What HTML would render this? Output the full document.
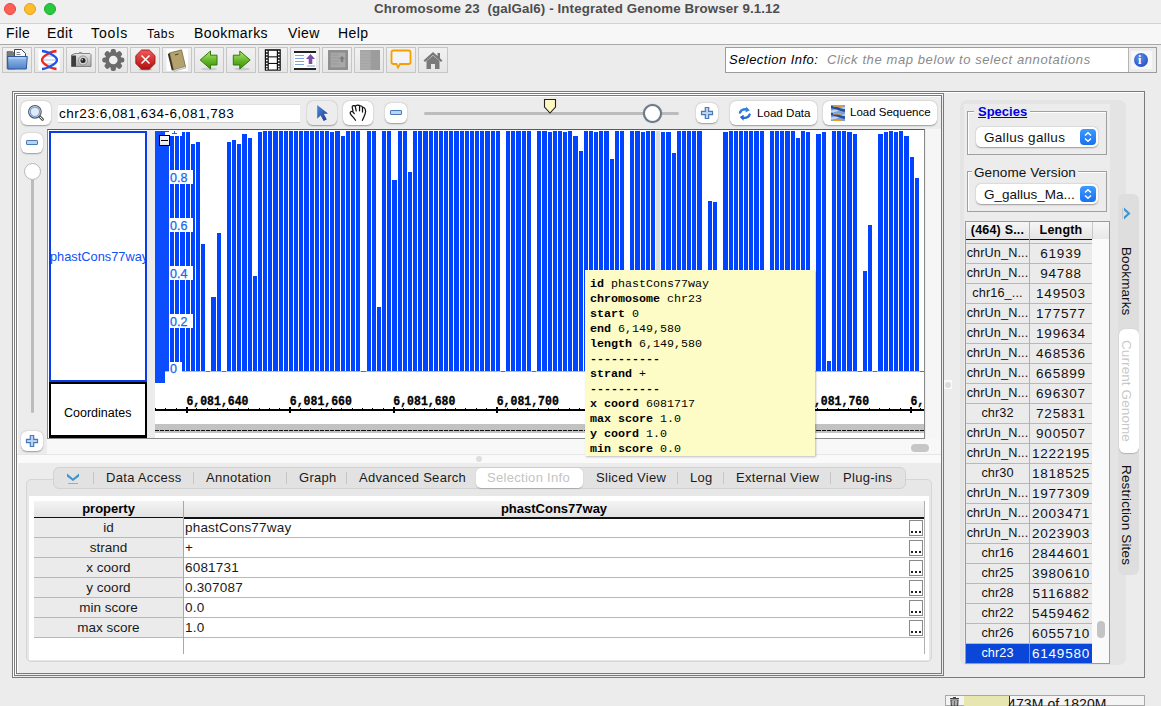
<!DOCTYPE html>
<html><head><meta charset="utf-8">
<style>
*{box-sizing:border-box}
html,body{margin:0;padding:0}
body{width:1161px;height:706px;overflow:hidden;background:#ececec;font-family:"Liberation Sans",sans-serif;position:relative;color:#000}
.a{position:absolute}
.t{position:absolute;white-space:nowrap;line-height:1}
#bars i{position:absolute;background:#0044ff;display:block}
#dsh i{position:absolute;top:429.5px;height:1.5px;background:#111;display:block}
.tb{position:absolute;top:47px;width:30px;height:26px;border:1px solid #c6c6c6;background:linear-gradient(#f2f2f2,#e6e6e6)}
.tb svg{position:absolute;left:2px;top:0px}
.rb{position:absolute;background:#fff;border-radius:6px;box-shadow:0 0.5px 1.5px rgba(0,0,0,.35)}
.mono{font-family:"Liberation Mono",monospace}
</style></head><body>

<!-- title bar -->
<div class="a" style="left:0;top:0;width:1161px;height:23px;background:#efefef"></div>
<div class="a" style="left:0;top:23px;width:1161px;height:1px;background:#d3d3d3"></div>
<div class="a" style="left:4px;top:3px;width:12px;height:12px;border-radius:50%;background:#fe5f57;border:0.5px solid #e2463f"></div>
<div class="a" style="left:24px;top:3px;width:12px;height:12px;border-radius:50%;background:#febc2e;border:0.5px solid #e1a116"></div>
<div class="a" style="left:44px;top:3px;width:12px;height:12px;border-radius:50%;background:#28c840;border:0.5px solid #1aac2c"></div>
<div class="t" style="left:374px;top:2px;font-size:13.3px;font-weight:bold;color:#4d4d4d;letter-spacing:0.12px">Chromosome 23&nbsp; (galGal6) - Integrated Genome Browser 9.1.12</div>

<!-- menu bar -->
<div class="a" style="left:0;top:24px;width:1161px;height:20px;background:#f7f7f7"></div>
<div class="a" style="left:0;top:44px;width:1161px;height:1px;background:#a9a9a9"></div>
<div class="t" style="left:6px;top:26px;font-size:14px;letter-spacing:0.45px">File</div>
<div class="t" style="left:47px;top:26px;font-size:14px;letter-spacing:0.45px">Edit</div>
<div class="t" style="left:91px;top:26px;font-size:14px;letter-spacing:0.9px">Tools</div>
<div class="t" style="left:147px;top:28px;font-size:12px;letter-spacing:0.6px">Tabs</div>
<div class="t" style="left:194px;top:26px;font-size:14px;letter-spacing:0.45px">Bookmarks</div>
<div class="t" style="left:288px;top:26px;font-size:14px;letter-spacing:0.45px">View</div>
<div class="t" style="left:338px;top:26px;font-size:14px;letter-spacing:0.45px">Help</div>

<!-- toolbar -->
<div class="tb" style="left:2px"><svg width="26" height="24" viewBox="0 0 26 24">
 <defs><linearGradient id="fg" x1="0" y1="0" x2="0" y2="1"><stop offset="0" stop-color="#9cc2ee"/><stop offset="1" stop-color="#4f82c8"/></linearGradient></defs>
 <path d="M2 3.5 H7.5 L9 5 H10 V21 H2 Z" fill="#7a7a7a" stroke="#555" stroke-width="0.6"/>
 <path d="M9.5 1.5 H16.5 L20.5 5.5 V12 H9.5 Z" fill="#fafafa" stroke="#444" stroke-width="1"/>
 <path d="M11.5 4.5 H15 M11.5 6.5 H15.5" stroke="#777" stroke-width="0.9"/>
 <path d="M2.5 8.5 H22.3 L21.3 21 H3 Z" fill="url(#fg)" stroke="#2d5a9a" stroke-width="1"/>
 <path d="M4 10 H20.5" stroke="#c4dbf6" stroke-width="1"/>
</svg></div>
<div class="tb" style="left:34px"><svg width="26" height="24" viewBox="0 0 26 24">
 <rect x="1.5" y="1.5" width="21" height="21" fill="#fff"/>
 <path d="M5.5 4.2 H19.5 M6 12 H19 M5.5 20 H19.5 M8 8 H17 M8 16 H17" stroke="#aac6e6" stroke-width="1.2"/>
 <path d="M19.5 3 C15 3 5 8 5 12 C5 16 15 21 19.5 21" stroke="#ee2a1e" stroke-width="2.3" fill="none"/>
 <path d="M5 3 C9 3 20 8 20 12 C20 16 9 21 5 21" stroke="#1f55e8" stroke-width="2.3" fill="none"/>
</svg></div>
<div class="tb" style="left:66px"><svg width="26" height="24" viewBox="0 0 26 24">
 <defs><linearGradient id="cg" x1="0" y1="0" x2="0" y2="1"><stop offset="0" stop-color="#e8e8e8"/><stop offset="1" stop-color="#a8a8a8"/></linearGradient></defs>
 <path d="M6 5.5 H21 L22 6.5 V18.5 H2.5 V7 Z" fill="url(#cg)" stroke="#707070" stroke-width="0.8"/>
 <rect x="2.5" y="7.5" width="4.5" height="11" fill="#3c3c3c"/>
 <rect x="10" y="4" width="3" height="2" fill="#9a9a9a"/>
 <circle cx="14" cy="12.5" r="4.6" fill="#d0d0d0" stroke="#888" stroke-width="0.8"/>
 <circle cx="14" cy="12.5" r="2.5" fill="#222"/>
 <circle cx="13.2" cy="11.7" r="0.7" fill="#fff"/>
</svg></div>
<div class="tb" style="left:98px"><svg width="26" height="24" viewBox="0 0 26 24">
 <g transform="translate(12.3 12)" fill="#6b6b6b">
 <circle r="8.3"/>
 <g id="gt"><rect x="-2.6" y="-11" width="5.2" height="5" rx="2"/></g>
 <use href="#gt" transform="rotate(45)"/><use href="#gt" transform="rotate(90)"/><use href="#gt" transform="rotate(135)"/>
 <use href="#gt" transform="rotate(180)"/><use href="#gt" transform="rotate(225)"/><use href="#gt" transform="rotate(270)"/><use href="#gt" transform="rotate(315)"/>
 </g>
 <circle cx="12.3" cy="12" r="4.3" fill="#f0f0f0"/>
</svg></div>
<div class="tb" style="left:130px"><svg width="26" height="24" viewBox="0 0 26 24">
 <defs><linearGradient id="rg" x1="0" y1="0" x2="0" y2="1"><stop offset="0" stop-color="#f25a5a"/><stop offset="1" stop-color="#b01010"/></linearGradient></defs>
 <ellipse cx="12.5" cy="21.5" rx="7" ry="1.2" fill="rgba(0,0,0,.2)"/>
 <path d="M8.5 2 H16.3 L22 7.7 V15.5 L16.3 21.2 H8.5 L2.8 15.5 V7.7 Z" fill="url(#rg)" stroke="#9a0a0a" stroke-width="0.8"/>
 <path d="M8.5 7.5 L16.5 15.5 M16.5 7.5 L8.5 15.5" stroke="#fff" stroke-width="1.5"/>
</svg></div>
<div class="tb" style="left:162px"><svg width="26" height="24" viewBox="0 0 26 24">
 <rect x="1.5" y="1" width="21.5" height="22" fill="#fff"/>
 <path d="M4.5 5 L16.5 1.8 L20.5 18.5 L8.5 22 Z" fill="#b3a26e" stroke="#6a5a30" stroke-width="0.7"/>
 <path d="M4.5 5 L8.5 22 L6.8 22.4 L2.8 6 Z" fill="#3a3220"/>
 <path d="M8.5 22 L20.5 18.5 L20.8 20 L9 23.3 Z" fill="#eee" stroke="#888" stroke-width="0.5"/>
 <path d="M10 7 L13.5 6" stroke="#5a4a25" stroke-width="1.2"/>
</svg></div>
<div class="tb" style="left:194px"><svg width="26" height="24" viewBox="0 0 26 24">
 <defs><linearGradient id="gg" x1="0" y1="0" x2="0" y2="1"><stop offset="0" stop-color="#b4e878"/><stop offset="0.6" stop-color="#5cb020"/><stop offset="1" stop-color="#3d9010"/></linearGradient></defs>
 <ellipse cx="12" cy="21" rx="8" ry="1.5" fill="rgba(0,0,0,.12)"/>
 <path d="M3.2 12 L13.5 3 V7.2 H20 V17 H13.5 V21 Z" fill="url(#gg)" stroke="#2f7a0a" stroke-width="1"/>
</svg></div>
<div class="tb" style="left:226px"><svg width="26" height="24" viewBox="0 0 26 24">
 <ellipse cx="13" cy="21" rx="8" ry="1.5" fill="rgba(0,0,0,.12)"/>
 <path d="M21.2 12 L10.8 3 V7.2 H4.3 V17 H10.8 V21 Z" fill="url(#gg)" stroke="#2f7a0a" stroke-width="1"/>
</svg></div>
<div class="tb" style="left:258px"><svg width="26" height="24" viewBox="0 0 26 24">
 <rect x="3.8" y="1.2" width="16" height="21.5" fill="#111"/>
 <rect x="7.8" y="2.8" width="8" height="5.5" fill="#fff"/><rect x="7.8" y="9.4" width="8" height="5.5" fill="#fff"/><rect x="7.8" y="16" width="8" height="5.5" fill="#fff"/>
 <path d="M5 3.5 h1.6 M5 6.5 h1.6 M5 9.5 h1.6 M5 12.5 h1.6 M5 15.5 h1.6 M5 18.5 h1.6 M5 21 h1.6 M17 3.5 h1.6 M17 6.5 h1.6 M17 9.5 h1.6 M17 12.5 h1.6 M17 15.5 h1.6 M17 18.5 h1.6 M17 21 h1.6" stroke="#fff" stroke-width="1.3"/>
</svg></div>
<div class="tb" style="left:290px"><svg width="26" height="24" viewBox="1 0 26 24">
 <rect x="2" y="3" width="22" height="19" fill="#fff"/>
 <rect x="2" y="3" width="22" height="2" fill="#222"/><rect x="2" y="20" width="22" height="2" fill="#222"/>
 <path d="M3 7.5 H12 M3 10.5 H12 M3 13.5 H12 M3 16.5 H12 M15 18 H23" stroke="#7aa6e0" stroke-width="1"/>
 <path d="M18.5 6 L23 11 H20.3 V16 H16.7 V11 H14 Z" fill="#7a4ea0"/>
</svg></div>
<div class="tb" style="left:322px"><svg width="26" height="24" viewBox="0 0 26 24">
 <rect x="3" y="2" width="20" height="20" fill="#909090"/>
 <rect x="5" y="4" width="16" height="16" fill="#a8a8a8" stroke="#8a8a8a" stroke-width="1"/>
 <path d="M6 7 H14 M6 10 H14 M6 13 H14 M6 16 H14" stroke="#999" stroke-width="1"/>
 <path d="M17 8 L20 11 H18.2 V14 H15.8 V11 H14 Z" fill="#7c7c7c"/>
</svg></div>
<div class="tb" style="left:354px"><svg width="26" height="24" viewBox="0 0 26 24">
 <rect x="3" y="2" width="20" height="20" fill="#a6a6a6"/>
 <rect x="14" y="2" width="9" height="20" fill="#9c9c9c"/>
 <path d="M3 5 H13 M3 8 H13 M3 11 H13 M3 14 H13 M3 17 H13 M3 20 H13" stroke="#b4b4b4" stroke-width="0.8"/>
</svg></div>
<div class="tb" style="left:386px"><svg width="26" height="24" viewBox="0 0 26 24">
 <path d="M4.5 2.5 H19.5 Q21.5 2.5 21.5 4.5 V14 Q21.5 16 19.5 16 H11 L9 19.5 L7.5 16 H4.5 Q2.5 16 2.5 14 V4.5 Q2.5 2.5 4.5 2.5 Z" fill="#f4f4f4" stroke="#f5a000" stroke-width="1.8"/>
</svg></div>
<div class="tb" style="left:418px"><svg width="26" height="24" viewBox="1 0 26 24">
 <path d="M3.5 12.5 L13 4 L22.5 12.5 L21 14 L13 7 L5 14 Z" fill="#777"/>
 <rect x="17.5" y="5" width="2.5" height="5" fill="#777"/>
 <path d="M6.5 13 L13 7.5 L19.5 13 V21 H15 V16 H11 V21 H6.5 Z" fill="#7a7a7a"/>
</svg></div>


<!-- selection info -->
<div class="a" style="left:725px;top:47px;width:432px;height:26px;background:#fff;border:1px solid #9c9c9c"></div>
<div class="t" style="left:729px;top:53px;font-size:13px;font-style:italic;letter-spacing:0.46px">Selection Info:</div>
<div class="t" style="left:827px;top:53px;font-size:13px;font-style:italic;color:#8a8a8a;letter-spacing:0.6px">Click the map below to select annotations</div>
<div class="a" style="left:1128px;top:48px;width:28px;height:24px;background:#ececec;border-left:1px solid #b4b4b4"></div>
<div class="a" style="left:1131px;top:51px;width:21px;height:18px;background:#f7f7f7"></div>
<div class="a" style="left:1134px;top:53px;width:14px;height:14px;border-radius:50%;background:radial-gradient(circle at 40% 35%,#5b8ff0,#1a3fb0);"></div>
<div class="t" style="left:1138px;top:54px;font-size:12px;font-weight:bold;color:#fff;font-family:'Liberation Serif',serif">i</div>

<!-- outer frames -->
<div class="a" style="left:12px;top:91px;width:1133px;height:587px;border:1px solid #7a7a7a;box-shadow:inset 1px 1px 0 #fff"></div>
<div class="a" style="left:14px;top:93px;width:930px;height:583px;border:1px solid #7a7a7a;box-shadow:inset 1px 1px 0 #fff"></div>
<div class="a" style="left:16px;top:95px;width:926px;height:579px;border:1px solid #7a7a7a;box-shadow:inset 1px 1px 0 #fff"></div>

<!-- ===== MAIN PANEL ===== -->
<!-- top controls -->
<div class="rb" style="left:21px;top:101px;width:30px;height:24px"></div>
<svg class="a" style="left:27px;top:104px" width="18" height="18" viewBox="0 0 18 18">
 <line x1="12.3" y1="12.3" x2="15.6" y2="15.6" stroke="#555" stroke-width="2.8" stroke-linecap="round"/>
 <line x1="12.6" y1="12.6" x2="15.4" y2="15.4" stroke="#f4f4f4" stroke-width="1" stroke-linecap="round"/>
 <circle cx="7.9" cy="7.8" r="6.3" fill="#f2f2f2" stroke="#555" stroke-width="1.2"/>
 <circle cx="7.9" cy="7.8" r="4.7" fill="#dfeaf8" stroke="#6a9fe0" stroke-width="1.1"/>
</svg>
<div class="a" style="left:58px;top:104px;width:242px;height:19px;background:#fff;border-bottom:1px solid #cdcdcd;box-shadow:inset 0 1px 0 #e0e0e0"></div>
<div class="t" style="left:59px;top:107px;font-size:13.5px;letter-spacing:0.53px">chr23:6,081,634-6,081,783</div>

<div class="a" style="left:307px;top:101px;width:30px;height:24px;border-radius:6px;background:#ededed;box-shadow:0 0.5px 1.5px rgba(0,0,0,.35)"></div>
<svg class="a" style="left:314px;top:104px" width="18" height="18" viewBox="0 0 18 18">
 <defs><linearGradient id="ag" x1="0" y1="0" x2="1" y2="1"><stop offset="0" stop-color="#4f8ae0"/><stop offset="1" stop-color="#173a90"/></linearGradient></defs>
 <path d="M3.2 0.9 L3.2 14.7 L6.6 11.4 L9.6 17 L12.8 15.6 L9.9 10 L14 9.5 Z" fill="url(#ag)"/>
</svg>
<div class="rb" style="left:343px;top:101px;width:30px;height:24px"></div>
<svg class="a" style="left:343px;top:101px" width="30" height="24" viewBox="0 0 30 24">
 <path d="M12.5 19.3 C11 16.5 8 14.5 7.3 12.5 C6.8 11 8.3 9.8 9.8 10.8 L11.3 12.6 M10 10.2 L9.2 6.2 C8.9 4.6 11.8 4.1 12.3 5.5 L13.2 9.8 M12.6 5.2 C12.9 3.9 16.4 3.8 16.6 5.1 L16.5 9.8 M16.5 5.1 C17.5 4.6 19.3 5 19.5 6.2 L19.5 11 M19.3 6 C21.5 6.4 22.6 8 22.6 10.5 C22.5 13.5 20.5 16.5 19.4 19.4" fill="none" stroke="#111" stroke-width="1.25" stroke-linecap="round" stroke-linejoin="round"/>
</svg>
<div class="rb" style="left:385px;top:103px;width:22px;height:20px"></div>
<div class="a" style="left:390px;top:110px;width:12px;height:5px;border:1.2px solid #4a79b8;background:#bcd3f0;border-radius:1px"></div>

<div class="a" style="left:424px;top:112px;width:255px;height:3px;background:#bcbcbc;border-radius:2px"></div>
<svg class="a" style="left:543px;top:98px" width="15" height="17" viewBox="0 0 15 17">
 <path d="M1.5 1.5 H12.5 V9 L7 15 L1.5 9 Z" fill="#fdf7c0" stroke="#222" stroke-width="1.1"/>
</svg>
<div class="a" style="left:643px;top:104px;width:19px;height:19px;border-radius:50%;background:#fff;border:2.5px solid #6c7c8c;box-shadow:0 0 1px rgba(0,0,0,.4)"></div>
<div class="rb" style="left:696px;top:103px;width:22px;height:20px"></div>
<svg class="a" style="left:700px;top:106px" width="14" height="14" viewBox="0 0 14 14">
 <path d="M5.3 1.5 H8.7 V5.3 H12.5 V8.7 H8.7 V12.5 H5.3 V8.7 H1.5 V5.3 H5.3 Z" fill="#bcd3f0" stroke="#4a79b8" stroke-width="1.2"/>
</svg>

<div class="rb" style="left:730px;top:101px;width:87px;height:24px"></div>
<svg class="a" style="left:734px;top:101px" width="30" height="24" viewBox="0 0 30 24">
 <defs><linearGradient id="ldg" x1="0" y1="0" x2="1" y2="1"><stop offset="0" stop-color="#3f8fe8"/><stop offset="1" stop-color="#1a5ad0"/></linearGradient></defs>
 <path d="M6 11.5 C7 8.8 9.5 8 12.8 8.3" stroke="url(#ldg)" stroke-width="2.4" fill="none" stroke-linecap="round"/>
 <path d="M12 5.8 L15.8 9.3 L11.6 11.6 Z" fill="#2a86e0"/>
 <path d="M15.6 13.6 C14.6 16.3 12 17.2 8.8 16.8" stroke="url(#ldg)" stroke-width="2.4" fill="none" stroke-linecap="round"/>
 <path d="M9.6 13.8 L5.8 16 L9.6 19.8 Z" fill="#1f62d8"/>
</svg>
<div class="t" style="left:757px;top:106.7px;font-size:11.6px">Load Data</div>
<div class="rb" style="left:823px;top:101px;width:114px;height:24px"></div>
<svg class="a" style="left:826px;top:101px" width="30" height="24" viewBox="0 0 30 24">
 <rect x="5" y="4" width="14" height="16" fill="#7d9fd8"/>
 <path d="M5 10.5 C9 10.5 15 7.2 19 7.2 M5 17.5 C9 17.5 15 14.3 19 14.3" stroke="#c4d6f2" stroke-width="2.2" fill="none"/>
 <path d="M5 6 C9 6 15 9.5 19 9.5 M5 13 C9 13 15 16.5 19 16.5" stroke="#244e9e" stroke-width="2.4" fill="none"/>
 <path d="M7 5 H17 M7 12.7 H15 M7 19.4 H15" stroke="#f0a020" stroke-width="1.4"/>
</svg>
<div class="t" style="left:850px;top:106.7px;font-size:11.5px">Load Sequence</div>

<!-- left vertical zoom -->
<div class="rb" style="left:21px;top:133px;width:22px;height:20px"></div>
<div class="a" style="left:26px;top:140px;width:12px;height:5px;border:1.2px solid #4a79b8;background:#bcd3f0;border-radius:1px"></div>
<div class="a" style="left:31px;top:175px;width:3px;height:238px;background:#bcbcbc;border-radius:2px"></div>
<div class="a" style="left:24px;top:163px;width:17px;height:17px;border-radius:50%;background:#fff;border:0.8px solid #b8b8b8"></div>
<div class="rb" style="left:21px;top:431px;width:22px;height:20px;z-index:2"></div>
<svg class="a" style="left:25px;top:434px;z-index:3" width="14" height="14" viewBox="0 0 14 14">
 <path d="M5.3 1.5 H8.7 V5.3 H12.5 V8.7 H8.7 V12.5 H5.3 V8.7 H1.5 V5.3 H5.3 Z" fill="#bcd3f0" stroke="#4a79b8" stroke-width="1.2"/>
</svg>

<!-- chart container -->
<div class="a" style="left:47px;top:129px;width:878px;height:310px;border:1px solid #8a8a8a;border-top-color:#5a5a5a;background:#fff"></div>
<div class="a" style="left:147px;top:130px;width:8px;height:308px;background:#ececec"></div>
<div class="a" style="left:926px;top:129px;width:15px;height:310px;background:#f6f6f6"></div>
<div class="a" style="left:49px;top:131px;width:98px;height:251px;border:2px solid #0a3ce8;background:#fff;overflow:hidden">
  <div class="t" style="left:-1px;top:118px;font-size:12.8px;color:#1050f8;letter-spacing:0px">phastCons77way</div>
</div>
<div class="a" style="left:49px;top:382px;width:98px;height:56px;border:2px solid #000;background:#fff;border-bottom-width:3px"></div>
<div class="t" style="left:64px;top:406.5px;font-size:12.5px">Coordinates</div>

<!-- bars -->
<div id="bars"><i style="left:170px;top:131px;width:4px;height:240px"></i><i style="left:175px;top:131px;width:4px;height:240px"></i><i style="left:180px;top:132px;width:5px;height:239px"></i><i style="left:186px;top:132px;width:4px;height:239px"></i><i style="left:191px;top:144px;width:4px;height:227px"></i><i style="left:196px;top:142px;width:4px;height:229px"></i><i style="left:201px;top:244px;width:4px;height:127px"></i><i style="left:206px;top:371px;width:4px;height:1px"></i><i style="left:211px;top:297px;width:5px;height:74px"></i><i style="left:217px;top:233px;width:4px;height:138px"></i><i style="left:222px;top:371px;width:4px;height:1px"></i><i style="left:227px;top:142px;width:4px;height:229px"></i><i style="left:232px;top:140px;width:4px;height:231px"></i><i style="left:237px;top:144px;width:4px;height:227px"></i><i style="left:242px;top:134px;width:5px;height:237px"></i><i style="left:248px;top:138px;width:4px;height:233px"></i><i style="left:253px;top:276px;width:4px;height:95px"></i><i style="left:258px;top:132px;width:4px;height:239px"></i><i style="left:263px;top:131px;width:4px;height:240px"></i><i style="left:268px;top:131px;width:4px;height:240px"></i><i style="left:273px;top:131px;width:5px;height:240px"></i><i style="left:279px;top:131px;width:4px;height:240px"></i><i style="left:284px;top:131px;width:4px;height:240px"></i><i style="left:289px;top:131px;width:4px;height:240px"></i><i style="left:294px;top:131px;width:4px;height:240px"></i><i style="left:299px;top:131px;width:4px;height:240px"></i><i style="left:304px;top:131px;width:5px;height:240px"></i><i style="left:310px;top:131px;width:4px;height:240px"></i><i style="left:315px;top:131px;width:4px;height:240px"></i><i style="left:320px;top:131px;width:4px;height:240px"></i><i style="left:325px;top:131px;width:4px;height:240px"></i><i style="left:330px;top:132px;width:4px;height:239px"></i><i style="left:335px;top:131px;width:5px;height:240px"></i><i style="left:341px;top:136px;width:4px;height:235px"></i><i style="left:346px;top:131px;width:4px;height:240px"></i><i style="left:351px;top:131px;width:4px;height:240px"></i><i style="left:356px;top:131px;width:4px;height:240px"></i><i style="left:361px;top:371px;width:5px;height:1px"></i><i style="left:367px;top:131px;width:4px;height:240px"></i><i style="left:372px;top:131px;width:4px;height:240px"></i><i style="left:377px;top:307px;width:4px;height:64px"></i><i style="left:382px;top:131px;width:4px;height:240px"></i><i style="left:387px;top:131px;width:4px;height:240px"></i><i style="left:392px;top:180px;width:5px;height:191px"></i><i style="left:398px;top:131px;width:4px;height:240px"></i><i style="left:403px;top:131px;width:4px;height:240px"></i><i style="left:408px;top:172px;width:4px;height:199px"></i><i style="left:413px;top:131px;width:4px;height:240px"></i><i style="left:418px;top:131px;width:4px;height:240px"></i><i style="left:423px;top:131px;width:5px;height:240px"></i><i style="left:429px;top:131px;width:4px;height:240px"></i><i style="left:434px;top:131px;width:4px;height:240px"></i><i style="left:439px;top:131px;width:4px;height:240px"></i><i style="left:444px;top:131px;width:4px;height:240px"></i><i style="left:449px;top:131px;width:4px;height:240px"></i><i style="left:454px;top:131px;width:5px;height:240px"></i><i style="left:460px;top:131px;width:4px;height:240px"></i><i style="left:465px;top:131px;width:4px;height:240px"></i><i style="left:470px;top:131px;width:4px;height:240px"></i><i style="left:475px;top:131px;width:4px;height:240px"></i><i style="left:480px;top:131px;width:4px;height:240px"></i><i style="left:485px;top:131px;width:5px;height:240px"></i><i style="left:491px;top:131px;width:4px;height:240px"></i><i style="left:496px;top:131px;width:4px;height:240px"></i><i style="left:501px;top:371px;width:4px;height:1px"></i><i style="left:506px;top:131px;width:4px;height:240px"></i><i style="left:511px;top:131px;width:4px;height:240px"></i><i style="left:516px;top:131px;width:5px;height:240px"></i><i style="left:522px;top:131px;width:4px;height:240px"></i><i style="left:527px;top:131px;width:4px;height:240px"></i><i style="left:532px;top:371px;width:4px;height:1px"></i><i style="left:537px;top:131px;width:4px;height:240px"></i><i style="left:542px;top:131px;width:5px;height:240px"></i><i style="left:548px;top:132px;width:4px;height:239px"></i><i style="left:553px;top:131px;width:4px;height:240px"></i><i style="left:558px;top:131px;width:4px;height:240px"></i><i style="left:563px;top:132px;width:4px;height:239px"></i><i style="left:568px;top:131px;width:4px;height:240px"></i><i style="left:573px;top:136px;width:5px;height:235px"></i><i style="left:579px;top:151px;width:4px;height:220px"></i><i style="left:584px;top:131px;width:4px;height:240px"></i><i style="left:589px;top:131px;width:4px;height:240px"></i><i style="left:594px;top:132px;width:4px;height:239px"></i><i style="left:599px;top:131px;width:4px;height:240px"></i><i style="left:604px;top:131px;width:5px;height:240px"></i><i style="left:610px;top:159px;width:4px;height:212px"></i><i style="left:615px;top:131px;width:4px;height:240px"></i><i style="left:620px;top:131px;width:4px;height:240px"></i><i style="left:625px;top:371px;width:4px;height:1px"></i><i style="left:630px;top:131px;width:4px;height:240px"></i><i style="left:635px;top:131px;width:5px;height:240px"></i><i style="left:641px;top:132px;width:4px;height:239px"></i><i style="left:646px;top:131px;width:4px;height:240px"></i><i style="left:651px;top:131px;width:4px;height:240px"></i><i style="left:656px;top:131px;width:4px;height:240px;background:#dcdcdc"></i><i style="left:661px;top:132px;width:4px;height:239px"></i><i style="left:666px;top:132px;width:5px;height:239px"></i><i style="left:672px;top:153px;width:4px;height:218px"></i><i style="left:677px;top:131px;width:4px;height:240px"></i><i style="left:682px;top:131px;width:4px;height:240px"></i><i style="left:687px;top:131px;width:4px;height:240px"></i><i style="left:692px;top:131px;width:4px;height:240px"></i><i style="left:697px;top:131px;width:5px;height:240px"></i><i style="left:703px;top:371px;width:4px;height:1px"></i><i style="left:708px;top:201px;width:4px;height:170px"></i><i style="left:713px;top:202px;width:4px;height:169px"></i><i style="left:718px;top:371px;width:4px;height:1px"></i><i style="left:723px;top:132px;width:5px;height:239px"></i><i style="left:729px;top:131px;width:4px;height:240px"></i><i style="left:734px;top:131px;width:4px;height:240px"></i><i style="left:739px;top:131px;width:4px;height:240px"></i><i style="left:744px;top:131px;width:4px;height:240px"></i><i style="left:749px;top:131px;width:4px;height:240px"></i><i style="left:754px;top:131px;width:5px;height:240px"></i><i style="left:760px;top:131px;width:4px;height:240px"></i><i style="left:765px;top:371px;width:4px;height:1px"></i><i style="left:770px;top:131px;width:4px;height:240px"></i><i style="left:775px;top:131px;width:4px;height:240px"></i><i style="left:780px;top:131px;width:4px;height:240px"></i><i style="left:785px;top:131px;width:5px;height:240px"></i><i style="left:791px;top:131px;width:4px;height:240px"></i><i style="left:796px;top:138px;width:4px;height:233px"></i><i style="left:801px;top:131px;width:4px;height:240px"></i><i style="left:806px;top:132px;width:4px;height:239px"></i><i style="left:811px;top:371px;width:4px;height:1px"></i><i style="left:816px;top:134px;width:5px;height:237px"></i><i style="left:822px;top:132px;width:4px;height:239px"></i><i style="left:827px;top:361px;width:4px;height:10px"></i><i style="left:832px;top:131px;width:4px;height:240px"></i><i style="left:837px;top:131px;width:4px;height:240px"></i><i style="left:842px;top:131px;width:4px;height:240px"></i><i style="left:847px;top:132px;width:5px;height:239px"></i><i style="left:853px;top:134px;width:4px;height:237px"></i><i style="left:858px;top:371px;width:4px;height:1px"></i><i style="left:863px;top:271px;width:4px;height:100px"></i><i style="left:868px;top:225px;width:4px;height:146px"></i><i style="left:873px;top:371px;width:4px;height:1px"></i><i style="left:878px;top:134px;width:5px;height:237px"></i><i style="left:884px;top:132px;width:4px;height:239px"></i><i style="left:889px;top:131px;width:4px;height:240px"></i><i style="left:894px;top:132px;width:4px;height:239px"></i><i style="left:899px;top:131px;width:4px;height:240px"></i><i style="left:904px;top:136px;width:5px;height:235px"></i><i style="left:910px;top:157px;width:4px;height:214px"></i><i style="left:915px;top:178px;width:4px;height:193px"></i><i style="left:920px;top:371px;width:4px;height:1px"></i></div>
<div class="a" style="left:155px;top:371px;width:769px;height:1px;background:#8c8c8c;opacity:.6"></div>
<!-- y labels -->
<div class="a" style="left:169px;top:170px;width:24px;height:14px;background:#fff"></div>
<div class="t" style="left:170px;top:172px;font-size:12.5px;color:#1a66f0;-webkit-text-stroke:0.25px #1a66f0">0.8</div>
<div class="a" style="left:169px;top:218px;width:24px;height:14px;background:#fff"></div>
<div class="t" style="left:170px;top:220px;font-size:12.5px;color:#1a66f0;-webkit-text-stroke:0.25px #1a66f0">0.6</div>
<div class="a" style="left:169px;top:266px;width:24px;height:14px;background:#fff"></div>
<div class="t" style="left:170px;top:268px;font-size:12.5px;color:#1a66f0;-webkit-text-stroke:0.25px #1a66f0">0.4</div>
<div class="a" style="left:169px;top:314px;width:24px;height:14px;background:#fff"></div>
<div class="t" style="left:170px;top:316px;font-size:12.5px;color:#1a66f0;-webkit-text-stroke:0.25px #1a66f0">0.2</div>
<div class="a" style="left:169px;top:362px;width:13px;height:10px;background:#fff"></div>
<div class="t" style="left:170px;top:363px;font-size:12.5px;color:#1a66f0;-webkit-text-stroke:0.25px #1a66f0">0</div>

<!-- handle -->
<div class="a" style="left:155px;top:131px;width:14px;height:240px;background:#0b4cff"></div><div class="a" style="left:169px;top:131px;width:1px;height:240px;background:#fff"></div>
<div class="a" style="left:155px;top:371px;width:10px;height:12px;background:#0b4cff"></div>
<div class="a" style="left:165px;top:132px;width:5px;height:4px;background:#fff"></div><div class="a" style="left:170px;top:131px;width:12px;height:5px;background:#fff"></div>
<div class="a" style="left:173.5px;top:131px;width:1.3px;height:2.5px;background:#1f66f0"></div>
<div class="a" style="left:171.5px;top:133px;width:5px;height:1.2px;background:#1f66f0"></div>
<div class="a" style="left:159px;top:135px;width:11px;height:11px;border:1px solid #000;background:linear-gradient(#fff,#e8e8e8)"></div>
<div class="a" style="left:161px;top:140px;width:7px;height:1px;background:#000"></div>
<!-- ruler -->
<div class="a" style="left:155px;top:380px;width:769px;height:44px;overflow:hidden"><div class="a" style="left:-155px;top:-380px;width:1161px;height:706px"><div class="a" style="left:155px;top:409px;width:769px;height:2px;background:#000"></div><div class="a" style="left:155px;top:408px;width:1px;height:1px;background:#000"></div><div class="a" style="left:165px;top:408px;width:1px;height:1px;background:#000"></div><div class="a" style="left:176px;top:408px;width:1px;height:1px;background:#000"></div><div class="a" style="left:186px;top:407px;width:2px;height:6px;background:#000"></div><div class="a" style="left:196px;top:408px;width:1px;height:1px;background:#000"></div><div class="a" style="left:207px;top:408px;width:1px;height:1px;background:#000"></div><div class="a" style="left:217px;top:408px;width:1px;height:1px;background:#000"></div><div class="a" style="left:227px;top:408px;width:1px;height:1px;background:#000"></div><div class="a" style="left:238px;top:408px;width:1px;height:1px;background:#000"></div><div class="a" style="left:248px;top:408px;width:1px;height:1px;background:#000"></div><div class="a" style="left:259px;top:408px;width:1px;height:1px;background:#000"></div><div class="a" style="left:269px;top:408px;width:1px;height:1px;background:#000"></div><div class="a" style="left:279px;top:408px;width:1px;height:1px;background:#000"></div><div class="a" style="left:289px;top:407px;width:2px;height:6px;background:#000"></div><div class="a" style="left:300px;top:408px;width:1px;height:1px;background:#000"></div><div class="a" style="left:310px;top:408px;width:1px;height:1px;background:#000"></div><div class="a" style="left:321px;top:408px;width:1px;height:1px;background:#000"></div><div class="a" style="left:331px;top:408px;width:1px;height:1px;background:#000"></div><div class="a" style="left:341px;top:408px;width:1px;height:1px;background:#000"></div><div class="a" style="left:352px;top:408px;width:1px;height:1px;background:#000"></div><div class="a" style="left:362px;top:408px;width:1px;height:1px;background:#000"></div><div class="a" style="left:372px;top:408px;width:1px;height:1px;background:#000"></div><div class="a" style="left:383px;top:408px;width:1px;height:1px;background:#000"></div><div class="a" style="left:393px;top:407px;width:2px;height:6px;background:#000"></div><div class="a" style="left:403px;top:408px;width:1px;height:1px;background:#000"></div><div class="a" style="left:414px;top:408px;width:1px;height:1px;background:#000"></div><div class="a" style="left:424px;top:408px;width:1px;height:1px;background:#000"></div><div class="a" style="left:434px;top:408px;width:1px;height:1px;background:#000"></div><div class="a" style="left:445px;top:408px;width:1px;height:1px;background:#000"></div><div class="a" style="left:455px;top:408px;width:1px;height:1px;background:#000"></div><div class="a" style="left:465px;top:408px;width:1px;height:1px;background:#000"></div><div class="a" style="left:476px;top:408px;width:1px;height:1px;background:#000"></div><div class="a" style="left:486px;top:408px;width:1px;height:1px;background:#000"></div><div class="a" style="left:496px;top:407px;width:2px;height:6px;background:#000"></div><div class="a" style="left:507px;top:408px;width:1px;height:1px;background:#000"></div><div class="a" style="left:517px;top:408px;width:1px;height:1px;background:#000"></div><div class="a" style="left:527px;top:408px;width:1px;height:1px;background:#000"></div><div class="a" style="left:538px;top:408px;width:1px;height:1px;background:#000"></div><div class="a" style="left:548px;top:408px;width:1px;height:1px;background:#000"></div><div class="a" style="left:558px;top:408px;width:1px;height:1px;background:#000"></div><div class="a" style="left:569px;top:408px;width:1px;height:1px;background:#000"></div><div class="a" style="left:579px;top:408px;width:1px;height:1px;background:#000"></div><div class="a" style="left:589px;top:408px;width:1px;height:1px;background:#000"></div><div class="a" style="left:600px;top:407px;width:2px;height:6px;background:#000"></div><div class="a" style="left:610px;top:408px;width:1px;height:1px;background:#000"></div><div class="a" style="left:621px;top:408px;width:1px;height:1px;background:#000"></div><div class="a" style="left:631px;top:408px;width:1px;height:1px;background:#000"></div><div class="a" style="left:641px;top:408px;width:1px;height:1px;background:#000"></div><div class="a" style="left:652px;top:408px;width:1px;height:1px;background:#000"></div><div class="a" style="left:662px;top:408px;width:1px;height:1px;background:#000"></div><div class="a" style="left:672px;top:408px;width:1px;height:1px;background:#000"></div><div class="a" style="left:683px;top:408px;width:1px;height:1px;background:#000"></div><div class="a" style="left:693px;top:408px;width:1px;height:1px;background:#000"></div><div class="a" style="left:703px;top:407px;width:2px;height:6px;background:#000"></div><div class="a" style="left:714px;top:408px;width:1px;height:1px;background:#000"></div><div class="a" style="left:724px;top:408px;width:1px;height:1px;background:#000"></div><div class="a" style="left:734px;top:408px;width:1px;height:1px;background:#000"></div><div class="a" style="left:745px;top:408px;width:1px;height:1px;background:#000"></div><div class="a" style="left:755px;top:408px;width:1px;height:1px;background:#000"></div><div class="a" style="left:765px;top:408px;width:1px;height:1px;background:#000"></div><div class="a" style="left:776px;top:408px;width:1px;height:1px;background:#000"></div><div class="a" style="left:786px;top:408px;width:1px;height:1px;background:#000"></div><div class="a" style="left:796px;top:408px;width:1px;height:1px;background:#000"></div><div class="a" style="left:806px;top:407px;width:2px;height:6px;background:#000"></div><div class="a" style="left:817px;top:408px;width:1px;height:1px;background:#000"></div><div class="a" style="left:827px;top:408px;width:1px;height:1px;background:#000"></div><div class="a" style="left:838px;top:408px;width:1px;height:1px;background:#000"></div><div class="a" style="left:848px;top:408px;width:1px;height:1px;background:#000"></div><div class="a" style="left:858px;top:408px;width:1px;height:1px;background:#000"></div><div class="a" style="left:869px;top:408px;width:1px;height:1px;background:#000"></div><div class="a" style="left:879px;top:408px;width:1px;height:1px;background:#000"></div><div class="a" style="left:889px;top:408px;width:1px;height:1px;background:#000"></div><div class="a" style="left:900px;top:408px;width:1px;height:1px;background:#000"></div><div class="a" style="left:910px;top:407px;width:2px;height:6px;background:#000"></div><div class="a" style="left:920px;top:408px;width:1px;height:1px;background:#000"></div><div class="t mono" style="left:186.4px;top:396px;font-size:11.5px;font-weight:bold;transform:scaleY(1.12);transform-origin:0 100%;-webkit-text-stroke:0.3px #000">6,081,640</div><div class="t mono" style="left:289.8px;top:396px;font-size:11.5px;font-weight:bold;transform:scaleY(1.12);transform-origin:0 100%;-webkit-text-stroke:0.3px #000">6,081,660</div><div class="t mono" style="left:393.3px;top:396px;font-size:11.5px;font-weight:bold;transform:scaleY(1.12);transform-origin:0 100%;-webkit-text-stroke:0.3px #000">6,081,680</div><div class="t mono" style="left:496.7px;top:396px;font-size:11.5px;font-weight:bold;transform:scaleY(1.12);transform-origin:0 100%;-webkit-text-stroke:0.3px #000">6,081,700</div><div class="t mono" style="left:600.1px;top:396px;font-size:11.5px;font-weight:bold;transform:scaleY(1.12);transform-origin:0 100%;-webkit-text-stroke:0.3px #000">6,081,720</div><div class="t mono" style="left:703.6px;top:396px;font-size:11.5px;font-weight:bold;transform:scaleY(1.12);transform-origin:0 100%;-webkit-text-stroke:0.3px #000">6,081,740</div><div class="t mono" style="left:807.0px;top:396px;font-size:11.5px;font-weight:bold;transform:scaleY(1.12);transform-origin:0 100%;-webkit-text-stroke:0.3px #000">6,081,760</div><div class="t mono" style="left:910.4px;top:396px;font-size:11.5px;font-weight:bold;transform:scaleY(1.12);transform-origin:0 100%;-webkit-text-stroke:0.3px #000">6,081,780</div></div></div>
<div class="a" style="left:155px;top:424px;width:769px;height:9px;background:#c2c2c2"></div>
<div id="dsh"><i style="left:155px;width:4px"></i><i style="left:160px;width:4px"></i><i style="left:165px;width:4px"></i><i style="left:170px;width:4px"></i><i style="left:175px;width:4px"></i><i style="left:180px;width:5px"></i><i style="left:186px;width:4px"></i><i style="left:191px;width:4px"></i><i style="left:196px;width:4px"></i><i style="left:201px;width:4px"></i><i style="left:206px;width:4px"></i><i style="left:211px;width:5px"></i><i style="left:217px;width:4px"></i><i style="left:222px;width:4px"></i><i style="left:227px;width:4px"></i><i style="left:232px;width:4px"></i><i style="left:237px;width:4px"></i><i style="left:242px;width:5px"></i><i style="left:248px;width:4px"></i><i style="left:253px;width:4px"></i><i style="left:258px;width:4px"></i><i style="left:263px;width:4px"></i><i style="left:268px;width:4px"></i><i style="left:273px;width:5px"></i><i style="left:279px;width:4px"></i><i style="left:284px;width:4px"></i><i style="left:289px;width:4px"></i><i style="left:294px;width:4px"></i><i style="left:299px;width:4px"></i><i style="left:304px;width:5px"></i><i style="left:310px;width:4px"></i><i style="left:315px;width:4px"></i><i style="left:320px;width:4px"></i><i style="left:325px;width:4px"></i><i style="left:330px;width:4px"></i><i style="left:335px;width:5px"></i><i style="left:341px;width:4px"></i><i style="left:346px;width:4px"></i><i style="left:351px;width:4px"></i><i style="left:356px;width:4px"></i><i style="left:361px;width:5px"></i><i style="left:367px;width:4px"></i><i style="left:372px;width:4px"></i><i style="left:377px;width:4px"></i><i style="left:382px;width:4px"></i><i style="left:387px;width:4px"></i><i style="left:392px;width:5px"></i><i style="left:398px;width:4px"></i><i style="left:403px;width:4px"></i><i style="left:408px;width:4px"></i><i style="left:413px;width:4px"></i><i style="left:418px;width:4px"></i><i style="left:423px;width:5px"></i><i style="left:429px;width:4px"></i><i style="left:434px;width:4px"></i><i style="left:439px;width:4px"></i><i style="left:444px;width:4px"></i><i style="left:449px;width:4px"></i><i style="left:454px;width:5px"></i><i style="left:460px;width:4px"></i><i style="left:465px;width:4px"></i><i style="left:470px;width:4px"></i><i style="left:475px;width:4px"></i><i style="left:480px;width:4px"></i><i style="left:485px;width:5px"></i><i style="left:491px;width:4px"></i><i style="left:496px;width:4px"></i><i style="left:501px;width:4px"></i><i style="left:506px;width:4px"></i><i style="left:511px;width:4px"></i><i style="left:516px;width:5px"></i><i style="left:522px;width:4px"></i><i style="left:527px;width:4px"></i><i style="left:532px;width:4px"></i><i style="left:537px;width:4px"></i><i style="left:542px;width:5px"></i><i style="left:548px;width:4px"></i><i style="left:553px;width:4px"></i><i style="left:558px;width:4px"></i><i style="left:563px;width:4px"></i><i style="left:568px;width:4px"></i><i style="left:573px;width:5px"></i><i style="left:579px;width:4px"></i><i style="left:584px;width:4px"></i><i style="left:589px;width:4px"></i><i style="left:594px;width:4px"></i><i style="left:599px;width:4px"></i><i style="left:604px;width:5px"></i><i style="left:610px;width:4px"></i><i style="left:615px;width:4px"></i><i style="left:620px;width:4px"></i><i style="left:625px;width:4px"></i><i style="left:630px;width:4px"></i><i style="left:635px;width:5px"></i><i style="left:641px;width:4px"></i><i style="left:646px;width:4px"></i><i style="left:651px;width:4px"></i><i style="left:656px;width:4px"></i><i style="left:661px;width:4px"></i><i style="left:666px;width:5px"></i><i style="left:672px;width:4px"></i><i style="left:677px;width:4px"></i><i style="left:682px;width:4px"></i><i style="left:687px;width:4px"></i><i style="left:692px;width:4px"></i><i style="left:697px;width:5px"></i><i style="left:703px;width:4px"></i><i style="left:708px;width:4px"></i><i style="left:713px;width:4px"></i><i style="left:718px;width:4px"></i><i style="left:723px;width:5px"></i><i style="left:729px;width:4px"></i><i style="left:734px;width:4px"></i><i style="left:739px;width:4px"></i><i style="left:744px;width:4px"></i><i style="left:749px;width:4px"></i><i style="left:754px;width:5px"></i><i style="left:760px;width:4px"></i><i style="left:765px;width:4px"></i><i style="left:770px;width:4px"></i><i style="left:775px;width:4px"></i><i style="left:780px;width:4px"></i><i style="left:785px;width:5px"></i><i style="left:791px;width:4px"></i><i style="left:796px;width:4px"></i><i style="left:801px;width:4px"></i><i style="left:806px;width:4px"></i><i style="left:811px;width:4px"></i><i style="left:816px;width:5px"></i><i style="left:822px;width:4px"></i><i style="left:827px;width:4px"></i><i style="left:832px;width:4px"></i><i style="left:837px;width:4px"></i><i style="left:842px;width:4px"></i><i style="left:847px;width:5px"></i><i style="left:853px;width:4px"></i><i style="left:858px;width:4px"></i><i style="left:863px;width:4px"></i><i style="left:868px;width:4px"></i><i style="left:873px;width:4px"></i><i style="left:878px;width:5px"></i><i style="left:884px;width:4px"></i><i style="left:889px;width:4px"></i><i style="left:894px;width:4px"></i><i style="left:899px;width:4px"></i><i style="left:904px;width:5px"></i><i style="left:910px;width:4px"></i><i style="left:915px;width:4px"></i><i style="left:920px;width:4px"></i></div>

<!-- scroll area below chart -->
<div class="a" style="left:47px;top:439px;width:894px;height:15px;background:#f8f8f8"></div>
<div class="a" style="left:17px;top:454px;width:924px;height:1px;background:#e6e6e6"></div>
<div class="a" style="left:17px;top:455px;width:924px;height:8px;background:#fafafa"></div>
<div class="a" style="left:911px;top:444px;width:18px;height:8px;border-radius:4px;background:#c6c6c6"></div>
<div class="a" style="left:476px;top:456px;width:6px;height:6px;border-radius:50%;background:#dedede"></div>
<div class="a" style="left:944px;top:380px;width:8px;height:9px;background:#fafafa"></div>
<div class="a" style="left:945px;top:382px;width:6px;height:6px;border-radius:50%;background:#dcdcdc"></div>

<!-- tooltip -->
<div class="a" style="left:585px;top:270px;width:230px;height:186px;background:#fdfcc6;box-shadow:1px 1px 2px rgba(0,0,0,.25)"></div>
<div class="a mono" style="left:590px;top:276.5px;font-size:11.67px;line-height:15px;white-space:pre;color:#000"><b>id</b> phastCons77way
<b>chromosome</b> chr23
<b>start</b> 0
<b>end</b> 6,149,580
<b>length</b> 6,149,580
<b>----------</b>
<b>strand</b> +
<b>----------</b>
<b>x coord</b> 6081717
<b>max score</b> 1.0
<b>y coord</b> 1.0
<b>min score</b> 0.0</div>


<!-- ===== BOTTOM TABS ===== -->
<div class="a" style="left:26px;top:479px;width:906px;height:183px;border:1px solid #d6d6d6;border-radius:5px;background:#e7e7e7"></div>
<div class="a" style="left:29px;top:496px;width:900px;height:164px;background:#fff"></div>
<div class="a" style="left:53px;top:467px;width:853px;height:22px;border:1px solid #d2d2d2;border-radius:6px;background:#e2e2e2"></div>
<svg class="a" style="left:65px;top:471px" width="16" height="14" viewBox="0 0 16 14">
 <path d="M2 2.5 L8 7.5 L14 2.5 L14 5.5 L8 10 L2 5.5 Z" fill="#3a96d0"/>
 <rect x="3" y="12" width="10" height="1" fill="#aaa"/>
</svg>
<div class="a" style="left:476px;top:468px;width:107px;height:20px;border-radius:5px;background:#fff;box-shadow:0 0.5px 1px rgba(0,0,0,.2)"></div>

<div class="t" style="left:106px;top:471px;font-size:13px;letter-spacing:0.3px;color:#1a1a1a">Data Access</div>
<div class="t" style="left:206px;top:471px;font-size:13px;letter-spacing:0.3px;color:#1a1a1a">Annotation</div>
<div class="t" style="left:299px;top:471px;font-size:13px;letter-spacing:0.3px;color:#1a1a1a">Graph</div>
<div class="t" style="left:359px;top:471px;font-size:13px;letter-spacing:0.3px;color:#1a1a1a">Advanced Search</div>
<div class="t" style="left:596px;top:471px;font-size:13px;letter-spacing:0.3px;color:#1a1a1a">Sliced View</div>
<div class="t" style="left:690px;top:471px;font-size:13px;letter-spacing:0.3px;color:#1a1a1a">Log</div>
<div class="t" style="left:736px;top:471px;font-size:13px;letter-spacing:0.3px;color:#1a1a1a">External View</div>
<div class="t" style="left:843px;top:471px;font-size:13px;letter-spacing:0.3px;color:#1a1a1a">Plug-ins</div>
<div class="t" style="left:487px;top:471px;font-size:13px;letter-spacing:0.3px;color:#c4c4c4;text-shadow:0 1px 0 #fff">Selection Info</div>
<div class="a" style="left:93px;top:472px;width:1px;height:12px;background:#c6c6c6"></div>
<div class="a" style="left:193px;top:472px;width:1px;height:12px;background:#c6c6c6"></div>
<div class="a" style="left:286px;top:472px;width:1px;height:12px;background:#c6c6c6"></div>
<div class="a" style="left:346px;top:472px;width:1px;height:12px;background:#c6c6c6"></div>
<div class="a" style="left:677px;top:472px;width:1px;height:12px;background:#c6c6c6"></div>
<div class="a" style="left:723px;top:472px;width:1px;height:12px;background:#c6c6c6"></div>
<div class="a" style="left:830px;top:472px;width:1px;height:12px;background:#c6c6c6"></div>
<div class="a" style="left:34px;top:501px;width:891px;height:16px;background:linear-gradient(#f4f4f4,#e2e2e2)"></div>
<div class="a" style="left:34px;top:517px;width:891px;height:1.5px;background:#111"></div>
<div class="a" style="left:34px;top:518px;width:149px;height:19px;background:#ebebeb"></div>
<div class="a" style="left:34px;top:537px;width:891px;height:1px;background:#b8b8b8"></div>
<div class="a" style="left:34px;top:538px;width:149px;height:19px;background:#ebebeb"></div>
<div class="a" style="left:34px;top:557px;width:891px;height:1px;background:#b8b8b8"></div>
<div class="a" style="left:34px;top:558px;width:149px;height:19px;background:#ebebeb"></div>
<div class="a" style="left:34px;top:577px;width:891px;height:1px;background:#b8b8b8"></div>
<div class="a" style="left:34px;top:578px;width:149px;height:19px;background:#ebebeb"></div>
<div class="a" style="left:34px;top:597px;width:891px;height:1px;background:#b8b8b8"></div>
<div class="a" style="left:34px;top:598px;width:149px;height:19px;background:#ebebeb"></div>
<div class="a" style="left:34px;top:617px;width:891px;height:1px;background:#b8b8b8"></div>
<div class="a" style="left:34px;top:618px;width:149px;height:19px;background:#ebebeb"></div>
<div class="a" style="left:34px;top:637px;width:891px;height:1px;background:#b8b8b8"></div>
<div class="a" style="left:183px;top:501px;width:1px;height:153px;background:#a8a8a8"></div>
<div class="a" style="left:924px;top:501px;width:1px;height:153px;background:#b0b0b0"></div>
<div class="t" style="left:34px;top:502px;width:149px;text-align:center;font-size:13px;font-weight:bold">property</div>
<div class="t" style="left:184px;top:502px;width:740px;text-align:center;font-size:13px;font-weight:bold">phastCons77way</div>
<div class="t" style="left:34px;top:521px;width:149px;text-align:center;font-size:13.5px;color:#1a1a1a">id</div>
<div class="t" style="left:185px;top:521px;font-size:13.5px;letter-spacing:0.2px;color:#1a1a1a">phastCons77way</div>
<div class="a" style="left:909px;top:520px;width:14px;height:16px;border:1px solid #8a8a8a;background:#fff"></div>
<div class="a" style="left:911px;top:531px;width:2px;height:2px;background:#222;box-shadow:4px 0 0 #222,8px 0 0 #222"></div>
<div class="t" style="left:34px;top:541px;width:149px;text-align:center;font-size:13.5px;color:#1a1a1a">strand</div>
<div class="t" style="left:185px;top:541px;font-size:13.5px;letter-spacing:0.2px;color:#1a1a1a">+</div>
<div class="a" style="left:909px;top:540px;width:14px;height:16px;border:1px solid #8a8a8a;background:#fff"></div>
<div class="a" style="left:911px;top:551px;width:2px;height:2px;background:#222;box-shadow:4px 0 0 #222,8px 0 0 #222"></div>
<div class="t" style="left:34px;top:561px;width:149px;text-align:center;font-size:13.5px;color:#1a1a1a">x coord</div>
<div class="t" style="left:185px;top:561px;font-size:13.5px;letter-spacing:0.2px;color:#1a1a1a">6081731</div>
<div class="a" style="left:909px;top:560px;width:14px;height:16px;border:1px solid #8a8a8a;background:#fff"></div>
<div class="a" style="left:911px;top:571px;width:2px;height:2px;background:#222;box-shadow:4px 0 0 #222,8px 0 0 #222"></div>
<div class="t" style="left:34px;top:581px;width:149px;text-align:center;font-size:13.5px;color:#1a1a1a">y coord</div>
<div class="t" style="left:185px;top:581px;font-size:13.5px;letter-spacing:0.2px;color:#1a1a1a">0.307087</div>
<div class="a" style="left:909px;top:580px;width:14px;height:16px;border:1px solid #8a8a8a;background:#fff"></div>
<div class="a" style="left:911px;top:591px;width:2px;height:2px;background:#222;box-shadow:4px 0 0 #222,8px 0 0 #222"></div>
<div class="t" style="left:34px;top:601px;width:149px;text-align:center;font-size:13.5px;color:#1a1a1a">min score</div>
<div class="t" style="left:185px;top:601px;font-size:13.5px;letter-spacing:0.2px;color:#1a1a1a">0.0</div>
<div class="a" style="left:909px;top:600px;width:14px;height:16px;border:1px solid #8a8a8a;background:#fff"></div>
<div class="a" style="left:911px;top:611px;width:2px;height:2px;background:#222;box-shadow:4px 0 0 #222,8px 0 0 #222"></div>
<div class="t" style="left:34px;top:621px;width:149px;text-align:center;font-size:13.5px;color:#1a1a1a">max score</div>
<div class="t" style="left:185px;top:621px;font-size:13.5px;letter-spacing:0.2px;color:#1a1a1a">1.0</div>
<div class="a" style="left:909px;top:620px;width:14px;height:16px;border:1px solid #8a8a8a;background:#fff"></div>
<div class="a" style="left:911px;top:631px;width:2px;height:2px;background:#222;box-shadow:4px 0 0 #222,8px 0 0 #222"></div>
<!-- ===== RIGHT PANEL ===== -->
<div class="a" style="left:960px;top:100px;width:166px;height:565px;border-radius:7px;background:#e4e4e4"></div>
<div class="a" style="left:964px;top:104px;width:146px;height:557px;background:#ececec"></div>
<!-- species group -->
<div class="a" style="left:967px;top:111px;width:140px;height:44px;border:1px solid #a0a0a0;box-shadow:inset 1px 1px 0 #fff"></div>
<div class="a" style="left:974px;top:104px;width:56px;height:14px;background:#ececec"></div>
<div class="t" style="left:978px;top:105px;font-size:13px;font-weight:bold;color:#0000e0;text-decoration:underline">Species</div>
<div class="rb" style="left:976px;top:127px;width:122px;height:20px;border-radius:5px"></div>
<div class="t" style="left:984px;top:131px;font-size:13.5px;letter-spacing:0.3px;color:#111">Gallus gallus</div>
<div class="a" style="left:1080px;top:129px;width:16px;height:16px;border-radius:4px;background:linear-gradient(#3c9bff,#1a6ff0)"></div>
<svg class="a" style="left:1080px;top:129px" width="16" height="16" viewBox="0 0 16 16"><path d="M5 6.5 L8 3.8 L11 6.5 M5 9.5 L8 12.2 L11 9.5" stroke="#fff" stroke-width="1.5" fill="none"/></svg>
<!-- genome version group -->
<div class="a" style="left:967px;top:171px;width:140px;height:41px;border:1px solid #a0a0a0;box-shadow:inset 1px 1px 0 #fff"></div>
<div class="a" style="left:972px;top:164px;width:106px;height:14px;background:#ececec"></div>
<div class="t" style="left:974px;top:165.5px;font-size:13.5px;letter-spacing:0.1px;color:#111">Genome Version</div>
<div class="rb" style="left:976px;top:184px;width:122px;height:20px;border-radius:5px"></div>
<div class="t" style="left:984px;top:188px;font-size:13.5px;letter-spacing:0px;color:#111">G_gallus_Ma...</div>
<div class="a" style="left:1080px;top:186px;width:16px;height:16px;border-radius:4px;background:linear-gradient(#3c9bff,#1a6ff0)"></div>
<svg class="a" style="left:1080px;top:186px" width="16" height="16" viewBox="0 0 16 16"><path d="M5 6.5 L8 3.8 L11 6.5 M5 9.5 L8 12.2 L11 9.5" stroke="#fff" stroke-width="1.5" fill="none"/></svg>
<!-- seq table -->
<div class="a" style="left:965px;top:221px;width:145px;height:443px;border:1px solid #9a9a9a;background:#fff"></div>
<div class="a" style="left:966px;top:222px;width:126px;height:17px;background:linear-gradient(#f6f6f6,#e4e4e4)"></div>
<div class="a" style="left:1092px;top:222px;width:17px;height:17px;background:linear-gradient(#f6f6f6,#e8e8e8);border-left:1px solid #c8c8c8"></div>
<div class="a" style="left:1092px;top:239px;width:17px;height:424px;background:#fafafa"></div>
<div class="a" style="left:966px;top:238.5px;width:126px;height:1.5px;background:#111"></div>
<div class="a" style="left:966px;top:240px;width:126px;height:3px;background:#ebebeb"></div>
<div class="a" style="left:966px;top:243px;width:126px;height:1px;background:#b8b8b8"></div>
<div class="a" style="left:1097px;top:621px;width:8px;height:17px;border-radius:4px;background:#c4c4c4"></div>
<div class="a" style="left:966px;top:244px;width:126px;height:19px;background:#ebebeb"></div>
<div class="a" style="left:966px;top:263px;width:126px;height:1px;background:#b8b8b8"></div>
<div class="a" style="left:966px;top:264px;width:126px;height:19px;background:#ebebeb"></div>
<div class="a" style="left:966px;top:283px;width:126px;height:1px;background:#b8b8b8"></div>
<div class="a" style="left:966px;top:284px;width:126px;height:19px;background:#ebebeb"></div>
<div class="a" style="left:966px;top:303px;width:126px;height:1px;background:#b8b8b8"></div>
<div class="a" style="left:966px;top:304px;width:126px;height:19px;background:#ebebeb"></div>
<div class="a" style="left:966px;top:323px;width:126px;height:1px;background:#b8b8b8"></div>
<div class="a" style="left:966px;top:324px;width:126px;height:19px;background:#ebebeb"></div>
<div class="a" style="left:966px;top:343px;width:126px;height:1px;background:#b8b8b8"></div>
<div class="a" style="left:966px;top:344px;width:126px;height:19px;background:#ebebeb"></div>
<div class="a" style="left:966px;top:363px;width:126px;height:1px;background:#b8b8b8"></div>
<div class="a" style="left:966px;top:364px;width:126px;height:19px;background:#ebebeb"></div>
<div class="a" style="left:966px;top:383px;width:126px;height:1px;background:#b8b8b8"></div>
<div class="a" style="left:966px;top:384px;width:126px;height:19px;background:#ebebeb"></div>
<div class="a" style="left:966px;top:403px;width:126px;height:1px;background:#b8b8b8"></div>
<div class="a" style="left:966px;top:404px;width:126px;height:19px;background:#ebebeb"></div>
<div class="a" style="left:966px;top:423px;width:126px;height:1px;background:#b8b8b8"></div>
<div class="a" style="left:966px;top:424px;width:126px;height:19px;background:#ebebeb"></div>
<div class="a" style="left:966px;top:443px;width:126px;height:1px;background:#b8b8b8"></div>
<div class="a" style="left:966px;top:444px;width:126px;height:19px;background:#ebebeb"></div>
<div class="a" style="left:966px;top:463px;width:126px;height:1px;background:#b8b8b8"></div>
<div class="a" style="left:966px;top:464px;width:126px;height:19px;background:#ebebeb"></div>
<div class="a" style="left:966px;top:483px;width:126px;height:1px;background:#b8b8b8"></div>
<div class="a" style="left:966px;top:484px;width:126px;height:19px;background:#ebebeb"></div>
<div class="a" style="left:966px;top:503px;width:126px;height:1px;background:#b8b8b8"></div>
<div class="a" style="left:966px;top:504px;width:126px;height:19px;background:#ebebeb"></div>
<div class="a" style="left:966px;top:523px;width:126px;height:1px;background:#b8b8b8"></div>
<div class="a" style="left:966px;top:524px;width:126px;height:19px;background:#ebebeb"></div>
<div class="a" style="left:966px;top:543px;width:126px;height:1px;background:#b8b8b8"></div>
<div class="a" style="left:966px;top:544px;width:126px;height:19px;background:#ebebeb"></div>
<div class="a" style="left:966px;top:563px;width:126px;height:1px;background:#b8b8b8"></div>
<div class="a" style="left:966px;top:564px;width:126px;height:19px;background:#ebebeb"></div>
<div class="a" style="left:966px;top:583px;width:126px;height:1px;background:#b8b8b8"></div>
<div class="a" style="left:966px;top:584px;width:126px;height:19px;background:#ebebeb"></div>
<div class="a" style="left:966px;top:603px;width:126px;height:1px;background:#b8b8b8"></div>
<div class="a" style="left:966px;top:604px;width:126px;height:19px;background:#ebebeb"></div>
<div class="a" style="left:966px;top:623px;width:126px;height:1px;background:#b8b8b8"></div>
<div class="a" style="left:966px;top:624px;width:126px;height:19px;background:#ebebeb"></div>
<div class="a" style="left:966px;top:643px;width:126px;height:1px;background:#b8b8b8"></div>
<div class="a" style="left:966px;top:644px;width:126px;height:19px;background:#0a46d8"></div>
<div class="a" style="left:1029px;top:222px;width:1px;height:421px;background:#b0b0b0"></div>
<div class="a" style="left:1029px;top:644px;width:1px;height:19px;background:#6a8ad8"></div>
<div class="t" style="left:966px;top:224px;width:63px;text-align:center;font-size:12.5px;font-weight:bold;letter-spacing:0.2px">(464) S...</div>
<div class="t" style="left:1030px;top:224px;width:62px;text-align:center;font-size:12.5px;font-weight:bold;letter-spacing:0.2px">Length</div>
<div class="t" style="left:966px;top:247px;width:63px;text-align:center;font-size:12.7px;letter-spacing:0.1px;color:#111">chrUn_N...</div>
<div class="t" style="left:1030px;top:247px;width:62px;text-align:center;font-size:13.5px;letter-spacing:0.8px;color:#111">61939</div>
<div class="t" style="left:966px;top:267px;width:63px;text-align:center;font-size:12.7px;letter-spacing:0.1px;color:#111">chrUn_N...</div>
<div class="t" style="left:1030px;top:267px;width:62px;text-align:center;font-size:13.5px;letter-spacing:0.8px;color:#111">94788</div>
<div class="t" style="left:966px;top:287px;width:63px;text-align:center;font-size:12.7px;letter-spacing:0.1px;color:#111">chr16_...</div>
<div class="t" style="left:1030px;top:287px;width:62px;text-align:center;font-size:13.5px;letter-spacing:0.8px;color:#111">149503</div>
<div class="t" style="left:966px;top:307px;width:63px;text-align:center;font-size:12.7px;letter-spacing:0.1px;color:#111">chrUn_N...</div>
<div class="t" style="left:1030px;top:307px;width:62px;text-align:center;font-size:13.5px;letter-spacing:0.8px;color:#111">177577</div>
<div class="t" style="left:966px;top:327px;width:63px;text-align:center;font-size:12.7px;letter-spacing:0.1px;color:#111">chrUn_N...</div>
<div class="t" style="left:1030px;top:327px;width:62px;text-align:center;font-size:13.5px;letter-spacing:0.8px;color:#111">199634</div>
<div class="t" style="left:966px;top:347px;width:63px;text-align:center;font-size:12.7px;letter-spacing:0.1px;color:#111">chrUn_N...</div>
<div class="t" style="left:1030px;top:347px;width:62px;text-align:center;font-size:13.5px;letter-spacing:0.8px;color:#111">468536</div>
<div class="t" style="left:966px;top:367px;width:63px;text-align:center;font-size:12.7px;letter-spacing:0.1px;color:#111">chrUn_N...</div>
<div class="t" style="left:1030px;top:367px;width:62px;text-align:center;font-size:13.5px;letter-spacing:0.8px;color:#111">665899</div>
<div class="t" style="left:966px;top:387px;width:63px;text-align:center;font-size:12.7px;letter-spacing:0.1px;color:#111">chrUn_N...</div>
<div class="t" style="left:1030px;top:387px;width:62px;text-align:center;font-size:13.5px;letter-spacing:0.8px;color:#111">696307</div>
<div class="t" style="left:966px;top:407px;width:63px;text-align:center;font-size:12.7px;letter-spacing:0.1px;color:#111">chr32</div>
<div class="t" style="left:1030px;top:407px;width:62px;text-align:center;font-size:13.5px;letter-spacing:0.8px;color:#111">725831</div>
<div class="t" style="left:966px;top:427px;width:63px;text-align:center;font-size:12.7px;letter-spacing:0.1px;color:#111">chrUn_N...</div>
<div class="t" style="left:1030px;top:427px;width:62px;text-align:center;font-size:13.5px;letter-spacing:0.8px;color:#111">900507</div>
<div class="t" style="left:966px;top:447px;width:63px;text-align:center;font-size:12.7px;letter-spacing:0.1px;color:#111">chrUn_N...</div>
<div class="t" style="left:1030px;top:447px;width:62px;text-align:center;font-size:13.5px;letter-spacing:0.8px;color:#111">1222195</div>
<div class="t" style="left:966px;top:467px;width:63px;text-align:center;font-size:12.7px;letter-spacing:0.1px;color:#111">chr30</div>
<div class="t" style="left:1030px;top:467px;width:62px;text-align:center;font-size:13.5px;letter-spacing:0.8px;color:#111">1818525</div>
<div class="t" style="left:966px;top:487px;width:63px;text-align:center;font-size:12.7px;letter-spacing:0.1px;color:#111">chrUn_N...</div>
<div class="t" style="left:1030px;top:487px;width:62px;text-align:center;font-size:13.5px;letter-spacing:0.8px;color:#111">1977309</div>
<div class="t" style="left:966px;top:507px;width:63px;text-align:center;font-size:12.7px;letter-spacing:0.1px;color:#111">chrUn_N...</div>
<div class="t" style="left:1030px;top:507px;width:62px;text-align:center;font-size:13.5px;letter-spacing:0.8px;color:#111">2003471</div>
<div class="t" style="left:966px;top:527px;width:63px;text-align:center;font-size:12.7px;letter-spacing:0.1px;color:#111">chrUn_N...</div>
<div class="t" style="left:1030px;top:527px;width:62px;text-align:center;font-size:13.5px;letter-spacing:0.8px;color:#111">2023903</div>
<div class="t" style="left:966px;top:547px;width:63px;text-align:center;font-size:12.7px;letter-spacing:0.1px;color:#111">chr16</div>
<div class="t" style="left:1030px;top:547px;width:62px;text-align:center;font-size:13.5px;letter-spacing:0.8px;color:#111">2844601</div>
<div class="t" style="left:966px;top:567px;width:63px;text-align:center;font-size:12.7px;letter-spacing:0.1px;color:#111">chr25</div>
<div class="t" style="left:1030px;top:567px;width:62px;text-align:center;font-size:13.5px;letter-spacing:0.8px;color:#111">3980610</div>
<div class="t" style="left:966px;top:587px;width:63px;text-align:center;font-size:12.7px;letter-spacing:0.1px;color:#111">chr28</div>
<div class="t" style="left:1030px;top:587px;width:62px;text-align:center;font-size:13.5px;letter-spacing:0.8px;color:#111">5116882</div>
<div class="t" style="left:966px;top:607px;width:63px;text-align:center;font-size:12.7px;letter-spacing:0.1px;color:#111">chr22</div>
<div class="t" style="left:1030px;top:607px;width:62px;text-align:center;font-size:13.5px;letter-spacing:0.8px;color:#111">5459462</div>
<div class="t" style="left:966px;top:627px;width:63px;text-align:center;font-size:12.7px;letter-spacing:0.1px;color:#111">chr26</div>
<div class="t" style="left:1030px;top:627px;width:62px;text-align:center;font-size:13.5px;letter-spacing:0.8px;color:#111">6055710</div>
<div class="t" style="left:966px;top:647px;width:63px;text-align:center;font-size:12.7px;letter-spacing:0.1px;color:#fff">chr23</div>
<div class="t" style="left:1030px;top:647px;width:62px;text-align:center;font-size:13.5px;letter-spacing:0.8px;color:#fff">6149580</div>
<!-- side tabs -->
<div class="a" style="left:1118px;top:194px;width:21px;height:381px;border-radius:6px;background:#dedede"></div>
<svg class="a" style="left:1121px;top:206px" width="12" height="15" viewBox="0 0 12 15"><path d="M3 1.5 L9.5 7.5 L3 13.5 L3 10.5 L6.5 7.5 L3 4.5 Z" fill="#3a96d0"/><rect x="1" y="2" width="1" height="11" fill="#c8c8c8"/></svg>
<div class="t" style="left:1133px;top:247px;font-size:13.5px;letter-spacing:0.1px;transform:rotate(90deg);transform-origin:0 0;color:#111">Bookmarks</div>
<div class="a" style="left:1119px;top:329px;width:20px;height:124px;border-radius:6px;background:#fff;box-shadow:0 0.5px 1px rgba(0,0,0,.2)"></div>
<div class="t" style="left:1133px;top:340px;font-size:13.5px;letter-spacing:0.1px;transform:rotate(90deg);transform-origin:0 0;color:#c8c8c8">Current Genome</div>
<div class="t" style="left:1133px;top:465px;font-size:13.5px;letter-spacing:0.15px;transform:rotate(90deg);transform-origin:0 0;color:#111">Restriction Sites</div>
<!-- status -->
<div class="a" style="left:945px;top:695px;width:200px;height:11px;border:1px solid #a8a8a8;background:#f4f4f4"></div>
<div class="a" style="left:964px;top:696px;width:46px;height:10px;background:#e8e6b0"></div>
<div class="a" style="left:1009px;top:696px;width:1px;height:10px;background:#333"></div>
<svg class="a" style="left:948px;top:697px" width="13" height="10" viewBox="0 0 13 10"><path d="M2 1.5 H11 M5 0.5 H8 M3 3 H10 L9.5 10 H3.5 Z" stroke="#444" stroke-width="1.2" fill="none"/><path d="M5 4 V9 M6.5 4 V9 M8 4 V9" stroke="#444" stroke-width="0.8"/></svg>
<div class="t" style="left:1008px;top:697px;font-size:14px;letter-spacing:0.1px;color:#111">473M of 1820M</div>


<!--STATUS-->

</body></html>
